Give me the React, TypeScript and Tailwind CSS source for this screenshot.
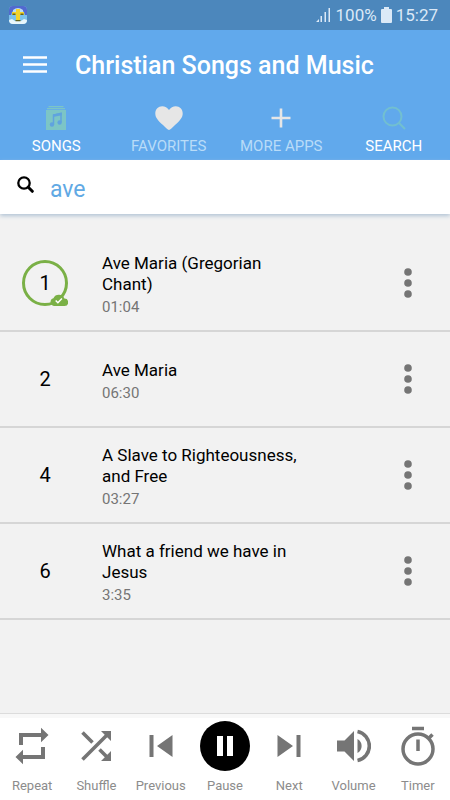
import { useState } from "react";
import type { ReactNode } from "react";

type Song = {
	id: number;
	title: string;
	duration: string;
	downloaded?: boolean;
};

const SONGS: Song[] = [
	{ id: 1, title: "Ave Maria (Gregorian Chant)", duration: "01:04", downloaded: true },
	{ id: 2, title: "Ave Maria", duration: "06:30" },
	{ id: 4, title: "A Slave to Righteousness, and Free", duration: "03:27" },
	{ id: 6, title: "What a friend we have in Jesus", duration: "3:35" },
];

export default function App() {
	const [query, setQuery] = useState("ave");

	return (
		<div className="flex min-h-screen flex-col bg-[#f2f2f2] font-['Roboto',sans-serif] text-black">
			<StatusBar />
			<header className="bg-[#61a9ec]">
				<div className="flex h-[72px] items-center gap-7 px-[23px]">
					<button type="button" aria-label="Open menu" className="shrink-0">
						<svg width="24" height="20" viewBox="0 0 24 20" fill="#fff">
							<path d="M0 .2h24v2.6H0zM0 7.200h24v2.600H0zM0 14.200h24v2.600H0z" />
						</svg>
					</button>
					<h1 className="text-[25px] leading-8 font-medium text-white">Christian Songs and Music</h1>
				</div>
				<nav className="grid h-[58px] grid-cols-4">
					<Tab label="SONGS" active icon={<SongsIcon />} />
					<Tab label="FAVORITES" icon={<HeartIcon />} />
					<Tab label="MORE APPS" icon={<PlusIcon />} />
					<Tab label="SEARCH" active icon={<SearchIcon />} />
				</nav>
			</header>

			<div className="flex h-[54px] items-center gap-4 bg-white px-[17px] shadow-[0_2px_4px_#b4c5d6]">
				<label htmlFor="song-search" aria-label="Search songs" className="mb-1 shrink-0">
					<svg width="17" height="18" viewBox="0 0 17 18" fill="none" stroke="#000">
						<circle cx="7" cy="7" r="5.7" strokeWidth="2.3" />
						<path d="M11.300 11.300l4 4" strokeWidth="3" strokeLinecap="round" />
					</svg>
				</label>
				<input
					id="song-search"
					type="text"
					value={query}
					onChange={(e) => setQuery(e.target.value)}
					className="w-full min-w-0 pt-1.5 text-[23px] leading-8 text-[#61a9e4] outline-none"
				/>
			</div>

			<main className="flex-1 pt-[22px]">
				<ul>
					{SONGS.map((song) => (
						<SongRow key={song.id} song={song} />
					))}
				</ul>
			</main>

			<footer className="border-t border-[#dcdcdc] bg-[#f8f8f8] pt-1">
				<div className="grid grid-cols-7 bg-white pb-1">
					<Control label="Repeat" icon={<RepeatIcon />} />
					<Control label="Shuffle" icon={<ShuffleIcon />} />
					<Control label="Previous" icon={<PreviousIcon />} />
					<Control label="Pause" icon={<PauseIcon />} />
					<Control label="Next" icon={<NextIcon />} />
					<Control label="Volume" icon={<VolumeIcon />} />
					<Control label="Timer" icon={<TimerIcon />} />
				</div>
			</footer>
		</div>
	);
}

const StatusBar = () => {
	return (
		<div className="flex h-[30px] items-center justify-between bg-[#4c87bc] pr-3 pl-[9px] text-[17px] leading-6 text-[#dbe9f7]">
			<svg width="18" height="18" viewBox="0 0 18 18">
				<rect width="18" height="18" rx="4" fill="#7cc3ec" />
				<path d="M4 0h10q4 0 4 4v5h-2Q15 3 9 3T2 9H0V4Q0 0 4 0z" fill="#5269cf" />
				<path d="M4 4q5-4 10 0v3H4z" fill="#b9dcf6" />
				<path d="M0 14l3-1 3 2h6l3-2 3 1q0 4-4 4H4q-4 0-4-4z" fill="#e8f6fb" />
				<path d="M7 3h4v3h4v3h-4v6H7V9H3V6h4z" fill="#f3d32c" />
				<path d="M3.500 7.500h3v1.500h-3zM11.500 7.500h3v1.500h-3zM6.500 14h5v1.200h-5z" fill="#62621e" />
			</svg>
			<div className="flex items-center gap-1">
				<svg width="17" height="16" viewBox="0 0 17 16" fill="#dbe9f7">
					<path d="M1 15l3-3v3zM5.500 9H7v6H5.500zM9.500 5H11v10H9.500zM13.500 1H15v14h-1.500z" />
				</svg>
				<span>100%</span>
				<svg width="11" height="16" viewBox="0 0 11 16" fill="#dbe9f7">
					<path d="M3 0h5v2h2q1 0 1 1v12q0 1-1 1H1q-1 0-1-1V3q0-1 1-1h2z" />
				</svg>
				<span>15:27</span>
			</div>
		</div>
	);
};

const Tab = ({ label, icon, active }: { label: string; icon: ReactNode; active?: boolean }) => {
	return (
		<button type="button" className="flex flex-col items-center gap-0.5">
			<span className="flex h-8 items-center justify-center">{icon}</span>
			<span className={`text-[15px] leading-5 ${active ? "text-white" : "text-[#b9dcf8]"}`}>{label}</span>
		</button>
	);
};

const SongRow = ({ song }: { song: Song }) => {
	return (
		<li className="flex h-24 items-center border-b-2 border-[#d6d6d6] px-[22px]">
			<span
				className={`relative flex size-[46px] shrink-0 items-center justify-center rounded-full text-xl ${
					song.downloaded ? "border-[3px] border-[#7ab046]" : ""
				}`}
			>
				{song.id}
				{song.downloaded && (
					<svg width="18" height="12" viewBox="0 0 18 12" className="absolute -right-[3px] -bottom-[3px]">
						<path d="M4 12a4 4 0 0 1-.6-7.8A6 6 0 0 1 14.4 4.6 3.7 3.7 0 0 1 14.5 12z" fill="#7ab046" />
						<path d="M5.7 6.4l2.2 2.3 4-4.3" fill="none" stroke="#fff" strokeWidth="1.5" />
					</svg>
				)}
			</span>
			<div className="ml-[34px] min-w-0 flex-1 pt-1.5">
				<p className="max-w-[210px] text-[17px] leading-[21px]">{song.title}</p>
				<p className="text-[15px] leading-6 text-[#757575]">{song.duration}</p>
			</div>
			<button type="button" aria-label={`Options for ${song.title}`} className="flex w-10 justify-center">
				<svg width="8" height="30" viewBox="0 0 8 30" fill="#757575">
					<circle cx="4" cy="4" r="3.8" />
					<circle cx="4" cy="15" r="3.8" />
					<circle cx="4" cy="26" r="3.8" />
				</svg>
			</button>
		</li>
	);
};

const Control = ({ label, icon }: { label: string; icon: ReactNode }) => {
	return (
		<button type="button" className="flex flex-col items-center gap-0.5 text-[#757575]">
			<span className="flex h-14 items-center justify-center">{icon}</span>
			<span className="text-[13px] leading-5 text-[#8c8c8c]">{label}</span>
		</button>
	);
};

const SongsIcon = () => (
	<svg width="20" height="24" viewBox="0 0 20 24">
		<path d="M2.5 0h15v1.2h-15zM1 2h18v1.2H1zM0 4h20v20H0z" fill="#7cc5c6" />
		<path d="M7.500 18V9l7.500-1.500V16" fill="none" stroke="#5fa3df" strokeWidth="1.5" />
		<path d="M7 8.600l8.700-2v2.600L7 11z" fill="#5fa3df" />
		<circle cx="6" cy="18.500" r="2.200" fill="#5fa3df" />
		<circle cx="13.600" cy="16.500" r="2.200" fill="#5fa3df" />
	</svg>
);

const HeartIcon = () => (
	<svg width="28" height="24" viewBox="0 0 28 24" fill="#e6e6e6">
		<path d="M14 24C12.600 23.600 11 21.800 8 19 3 14.400.3 11.500.3 7.400.3 3.400 3.300.3 7.200.3c2.700 0 5.300 1.300 6.800 3.800C15.500 1.600 18.100.3 20.800.3c3.900 0 6.900 3.100 6.900 7.100 0 4.100-2.700 7-7.700 11.600-3 2.800-4.600 4.600-6 5z" />
	</svg>
);

const PlusIcon = () => (
	<svg width="20" height="20" viewBox="0 0 20 20" stroke="#e6e6e6" strokeWidth="2.6">
		<path d="M10 .5v19M.5 10h19" />
	</svg>
);

const SearchIcon = () => (
	<svg width="24" height="24" viewBox="0 0 24 24" fill="none" stroke="#72bfd0" strokeWidth="2">
		<circle cx="10.5" cy="10.5" r="9" />
		<path d="M16.8 16.8l6.200 6.200" />
	</svg>
);

const RepeatIcon = () => (
	<svg width="34" height="38" viewBox="0 0 34 38" fill="currentColor">
		<path d="M4 18V6h22V.8L33.500 8 26 15.200V10H8v8zM30 20v12H8v5.200L.5 30 8 22.800V28h18v-8z" />
	</svg>
);

const ShuffleIcon = () => (
	<svg width="30" height="30" viewBox="0 0 30 30">
		<path d="M1.500 1.500l10 10M1.500 28.500L26 4M18.500 18.500l8 8" fill="none" stroke="currentColor" strokeWidth="3.600" />
		<path d="M20 0h10v10zM30 20v10H20z" fill="currentColor" />
	</svg>
);

const PreviousIcon = () => (
	<svg width="24" height="24" viewBox="0 0 24 24" fill="currentColor">
		<path d="M.5 1h4v22h-4zM23.5 1v22L8 12z" />
	</svg>
);

const PauseIcon = () => (
	<svg width="50" height="50" viewBox="0 0 50 50">
		<circle cx="25" cy="25" r="25" fill="#000" />
		<path d="M17 15h6v20h-6zM27 15h6v20h-6z" fill="#fff" />
	</svg>
);

const NextIcon = () => (
	<svg width="24" height="24" viewBox="0 0 24 24" fill="currentColor">
		<path d="M19.5 1h4v22h-4zM.5 1v22L16 12z" />
	</svg>
);

const VolumeIcon = () => (
	<svg width="34" height="34" viewBox="0 0 34 34" fill="currentColor">
		<path d="M0 11.500h7.500L17 2v30l-9.500-9.500H0zM20.500 10a8 8 0 0 1 0 14z" />
		<path d="M20.500 2.500a14.800 14.800 0 0 1 0 29" fill="none" stroke="currentColor" strokeWidth="3.600" />
	</svg>
);

const TimerIcon = () => (
	<svg width="34" height="40" viewBox="0 0 34 40" fill="none" stroke="currentColor" strokeWidth="3.5">
		<circle cx="17" cy="23" r="15" />
		<path d="M11 2.500h12M17 13.500v11.500M28 12l3.500-3.500" />
	</svg>
);
